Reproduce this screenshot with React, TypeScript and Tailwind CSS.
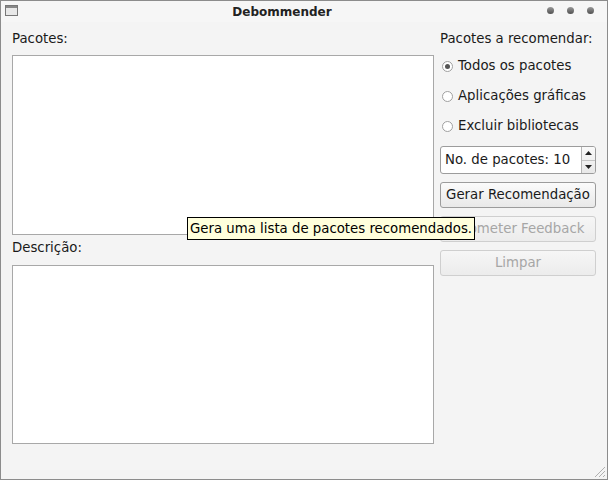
import React from "react";

const font = { fontFamily: '"DejaVu Sans", "Liberation Sans", sans-serif' };

function Radio({ checked, label }: { checked?: boolean; label: string }) {
  return (
    <div className="flex items-center h-[30px] pl-[2px]">
      <span className="relative w-[11px] h-[11px] rounded-full border border-[#a0a0a0] bg-white flex items-center justify-center">
        {checked && <span className="w-[5px] h-[5px] rounded-full bg-[#555]" />}
      </span>
      <span className="ml-[5px] text-[13.3px] text-[#1a1a1a] leading-[16px]">{label}</span>
    </div>
  );
}

function Btn({ label, disabled }: { label: string; disabled?: boolean }) {
  return (
    <div
      className={
        "h-[26px] flex items-center justify-center rounded-[3px] border text-[13.3px] leading-[16px] " +
        (disabled
          ? "border-[#cfcfcf] text-[#a6a6a6] bg-gradient-to-b from-[#f6f6f6] to-[#ececec]"
          : "border-[#9c9c9c] text-[#1a1a1a] bg-gradient-to-b from-[#fbfbfb] to-[#e9e9e9]")
      }
    >
      {label}
    </div>
  );
}

export default function App() {
  return (
    <div style={font} className="relative w-[608px] h-[480px] bg-[#f4f4f4] border border-[#8c8c8c] overflow-hidden">
      {/* title bar */}
      <div className="relative h-[21px] flex items-center justify-center pr-[44px] bg-[#f6f6f6]">
        <div className="absolute left-[4px] top-[4px] w-[13px] h-[11px] border border-[#777] bg-[#e8e8e8]">
          <div className="h-[2px] bg-[#888]" />
        </div>
        <span className="text-[12px] font-bold text-[#222] leading-[16px]">Debommender</span>
        <div className="absolute right-[13px] top-[6px] flex gap-[13px]">
          {[0, 1, 2].map((i) => (
            <span key={i} className="w-[7px] h-[7px] rounded-full bg-gradient-to-b from-[#9a9a9a] to-[#505050]" />
          ))}
        </div>
      </div>

      {/* body */}
      <div className="flex pl-[11px] pt-[9px]">
        <div className="w-[422px] flex flex-col">
          <div className="h-[16px] text-[13.3px] leading-[16px] text-[#1a1a1a]">Pacotes:</div>
          <div className="mt-[8px] h-[180px] bg-white border border-[#a8a8a8]" />
          <div className="mt-[5px] h-[16px] text-[13.3px] leading-[16px] text-[#1a1a1a]">Descrição:</div>
          <div className="mt-[9px] h-[179px] bg-white border border-[#a8a8a8]" />
        </div>
        <div className="ml-[6px] w-[156px] flex flex-col">
          <div className="h-[16px] text-[13.3px] leading-[16px] text-[#1a1a1a] whitespace-nowrap">Pacotes a recomendar:</div>
          <div className="mt-[4px] flex flex-col">
            <Radio checked label="Todos os pacotes" />
            <Radio label="Aplicações gráficas" />
            <Radio label="Excluir bibliotecas" />
          </div>
          <div className="mt-[5px] h-[28px] flex rounded-[3px] border border-[#9c9c9c] bg-white overflow-hidden">
            <div className="flex-1 flex items-center pl-[4px] text-[13.3px] leading-[16px] text-[#1a1a1a] whitespace-nowrap">No. de pacotes: 10</div>
            <div className="w-[14px] flex flex-col border-l border-[#b5b5b5] bg-gradient-to-b from-[#fafafa] to-[#e8e8e8]">
              <div className="flex-1 flex items-center justify-center border-b border-[#c4c4c4]">
                <svg width="7" height="4" viewBox="0 0 7 4"><path d="M0 4 L3.5 0 L7 4 Z" fill="#222" /></svg>
              </div>
              <div className="flex-1 flex items-center justify-center">
                <svg width="7" height="4" viewBox="0 0 7 4"><path d="M0 0 L3.5 4 L7 0 Z" fill="#222" /></svg>
              </div>
            </div>
          </div>
          <div className="mt-[8px] flex flex-col gap-[8px] whitespace-nowrap">
            <Btn label="Gerar Recomendação" />
            <Btn label="Submeter Feedback" disabled />
            <Btn label="Limpar" disabled />
          </div>
        </div>
      </div>

      {/* tooltip */}
      <div className="absolute left-[186px] top-[216px] w-[288px] h-[23px] bg-[#ffffdc] border border-black flex items-center pl-[2px] text-[13.3px] leading-[16px] text-black whitespace-nowrap overflow-hidden">
        Gera uma lista de pacotes recomendados.
      </div>

      {/* resize grip */}
      <svg className="absolute right-[1px] bottom-[1px]" width="14" height="14" viewBox="0 0 14 14">
        <path d="M13 3 L3 13 M13 7 L7 13 M13 11 L11 13" stroke="#b0b0b0" strokeWidth="1" />
      </svg>
    </div>
  );
}
